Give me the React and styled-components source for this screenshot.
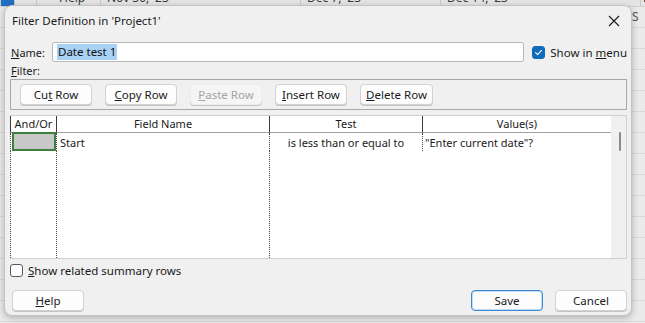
import React from "react";
import styled, { createGlobalStyle } from "styled-components";

const Global = createGlobalStyle`
  html, body { margin: 0; padding: 0; }
  body { width: 645px; height: 323px; overflow: hidden; font-family: "Noto Sans", "Segoe UI", sans-serif; }
`;

const Desktop = styled.div`
  position: relative;
  width: 645px;
  height: 323px;
  background: #eaeaea;
  overflow: hidden;
`;

const GanttHeader = styled.div`
  display: flex;
  height: 6px;
  overflow: hidden;
  align-items: flex-end;
  background: #e4e4e4;
  border-bottom: 1px solid #cfcfcf;
`;

const HeadCell = styled.div`
  width: ${(p) => p.w}px;
  flex: none;
  height: 16px;
  line-height: 16px;
  font-size: 12px;
  color: #3a3a3a;
  white-space: nowrap;
  padding-left: ${(p) => p.pl || 4}px;
  border-left: 1px solid #c8c8c8;
  box-sizing: border-box;
  background: ${(p) => p.bg || "transparent"};
`;

const GridRows = styled.div`
  display: flex;
  flex-direction: column;
`;

const GridRow = styled.div`
  height: 20px;
  border-bottom: 1px solid #d8d8d8;
  display: flex;
  justify-content: flex-end;
  font-size: 12px;
  color: #555;
`;

const SideText = styled.span`
  width: 13px;
  line-height: 20px;
`;

const Dialog = styled.div`
  position: absolute;
  left: 4px;
  top: 5px;
  width: 628px;
  height: 311px;
  box-sizing: border-box;
  background: #f0f0f0;
  border: 1px solid #c4c4c4;
  border-radius: 8px;
  box-shadow: 0 2px 6px rgba(0, 0, 0, 0.25);
  display: flex;
  flex-direction: column;
  font-family: "Noto Sans", "Segoe UI", sans-serif;
  font-size: 11px;
  color: #1a1a1a;
  white-space: nowrap;
`;

const TitleBar = styled.div`
  height: 29px;
  display: flex;
  align-items: center;
  justify-content: space-between;
  padding: 0 6px 0 7px;
`;

const Title = styled.div`
  font-size: 11.5px;
  color: #1a1a1a;
`;

const CloseBtn = styled.div`
  width: 22px;
  height: 22px;
  display: flex;
  align-items: center;
  justify-content: center;
`;

const Body = styled.div`
  display: flex;
  flex-direction: column;
  padding: 0 4px 0 5px;
`;

const NameRow = styled.div`
  display: flex;
  align-items: center;
  height: 22px;
  margin-top: 6px;
`;

const Label = styled.span`
  width: ${(p) => p.w || "auto"};
  flex: none;
  padding-left: 1px;
`;

const U = styled.span`
  text-decoration: underline;
  text-underline-offset: 1px;
`;

const NameInput = styled.div`
  width: 477px;
  height: 20px;
  box-sizing: border-box;
  background: #ffffff;
  border: 1px solid #b8b8b8;
  border-radius: 2px;
  display: flex;
  align-items: center;
  padding-left: 4px;
  margin-left: 3px;
`;

const Selected = styled.span`
  background: #a9d1f4;
  color: #111;
  padding: 1px 1px;
  line-height: 14px;
  font-size: 11.5px;
`;

const CheckLabel = styled.label`
  display: flex;
  align-items: center;
  gap: 5px;
  margin-left: ${(p) => p.ml || 0}px;
  font-size: 11.5px;
`;

const Box = styled.span`
  width: 13px;
  height: 13px;
  box-sizing: border-box;
  border-radius: 3px;
  flex: none;
  display: flex;
  align-items: center;
  justify-content: center;
  background: ${(p) => (p.checked ? "#0f6cbd" : "#ffffff")};
  border: 1px solid ${(p) => (p.checked ? "#0f6cbd" : "#5a5a5a")};
`;

const FilterLabel = styled.div`
  height: 14px;
  line-height: 14px;
  margin-top: 1px;
  padding-left: 1px;
`;

const Toolbar = styled.div`
  margin-top: 1px;
  height: 31px;
  box-sizing: border-box;
  border: 1px solid #a8a8a8;
  display: flex;
  align-items: center;
  gap: 13px;
  padding-left: 9px;
`;

const Button = styled.div`
  width: ${(p) => p.w || 72}px;
  height: 21px;
  box-sizing: border-box;
  border-radius: 4px;
  display: flex;
  align-items: center;
  justify-content: center;
  font-size: 11.5px;
  background: ${(p) => (p.disabled ? "#f5f5f5" : "#fdfdfd")};
  color: ${(p) => (p.disabled ? "#a3a3a3" : "#1a1a1a")};
  border: 1px solid ${(p) => (p.primary ? "#3d89d6" : p.disabled ? "#ececec" : "#d3d3d3")};
  box-shadow: ${(p) => (p.primary ? "inset 0 0 0 1px #c4dcf3" : "0 1px 0 #c4c4c4")};
`;

const Table = styled.div`
  margin-top: 5px;
  height: 144px;
  box-sizing: border-box;
  border: 1px solid #d0d0d0;
  border-left: none;
  display: flex;
  background: #ffffff;
`;

const Grid = styled.div`
  flex: 1;
  display: grid;
  grid-template-columns: 46px 213px 153px 1fr;
  grid-template-rows: 17px 18px 1fr;
`;

const HCell = styled.div`
  border-left: 1px solid #3a3a3a;
  border-bottom: 1px solid #a0a0a0;
  display: flex;
  align-items: center;
  justify-content: center;
  color: #1a1a1a;
  line-height: 16px;
`;

const Cell = styled.div`
  border-left: 1px dotted #4a4a4a;
  display: flex;
  align-items: center;
  justify-content: ${(p) => p.align || "flex-start"};
  padding-left: ${(p) => p.pl || 0}px;
  color: #1a1a1a;
`;

const SelCell = styled.div`
  border-left: 1px dotted #4a4a4a;
  display: flex;
  padding: 0 0 0 1px;
`;

const SelFill = styled.div`
  flex: 1;
  background: #c8c8c8;
  border: 2px solid #3e7f3e;
  margin-top: -1px;
`;

const EmptyCell = styled.div`
  border-left: 1px dotted ${(p) => (p.last ? "transparent" : "#4a4a4a")};
`;

const ScrollTrack = styled.div`
  width: 15px;
  background: #f0f0f0;
  display: flex;
  justify-content: center;
  padding-top: 16px;
  box-sizing: border-box;
`;

const Thumb = styled.div`
  width: 2px;
  height: 19px;
  border-radius: 1px;
  background: #8a8a8a;
  margin-left: 2px;
`;

const SummaryRow = styled.div`
  margin-top: 4px;
  height: 14px;
  display: flex;
  align-items: center;
`;

const Footer = styled.div`
  margin-top: 13px;
  display: flex;
  align-items: center;
  padding-left: 2px;
`;

const Spacer = styled.div`
  flex: 1;
`;

const FooterRight = styled.div`
  display: flex;
  gap: 12px;
`;

function Check() {
  return (
    <svg width="9" height="9" viewBox="0 0 10 10">
      <path d="M1.8 5.2 L4 7.3 L8.3 2.6" fill="none" stroke="#fff" strokeWidth="1.3" strokeLinecap="round" strokeLinejoin="round" />
    </svg>
  );
}

export default function App() {
  const rows = Array.from({ length: 15 });
  return (
    <Desktop>
      <Global />
      <GanttHeader>
        <HeadCell w={14} bg="#1f6fc5" />
        <HeadCell w={22} />
        <HeadCell w={64} pl={22}>Help</HeadCell>
        <HeadCell w={200} pl={6}>Nov 30, '23</HeadCell>
        <HeadCell w={140} pl={6}>Dec 7, '23</HeadCell>
        <HeadCell w={200} pl={6}>Dec 14, '23</HeadCell>
        <HeadCell w={40} pl={2}>De</HeadCell>
      </GanttHeader>
      <GridRows>
        <GridRow><SideText>S</SideText></GridRow>
        {rows.map((_, i) => (
          <GridRow key={i} />
        ))}
      </GridRows>

      <Dialog>
        <TitleBar>
          <Title>Filter Definition in 'Project1'</Title>
          <CloseBtn>
            <svg width="12" height="12" viewBox="0 0 12 12">
              <path d="M1 1 L11 11 M11 1 L1 11" stroke="#1a1a1a" strokeWidth="1.1" />
            </svg>
          </CloseBtn>
        </TitleBar>
        <Body>
          <NameRow>
            <Label w="38px">
              <U>N</U>ame:
            </Label>
            <NameInput>
              <Selected>Date test 1</Selected>
            </NameInput>
            <CheckLabel ml={8}>
              <Box checked>
                <Check />
              </Box>
              <span>
                Show in <U>m</U>enu
              </span>
            </CheckLabel>
          </NameRow>
          <FilterLabel>
            <U>F</U>ilter:
          </FilterLabel>
          <Toolbar>
            <Button>
              Cu<U>t</U>&nbsp;Row
            </Button>
            <Button>
              <U>C</U>opy Row
            </Button>
            <Button disabled>
              <U>P</U>aste Row
            </Button>
            <Button>
              <U>I</U>nsert Row
            </Button>
            <Button w={73}>
              <U>D</U>elete Row
            </Button>
          </Toolbar>
          <Table>
            <Grid>
              <HCell>And/Or</HCell>
              <HCell>Field Name</HCell>
              <HCell>Test</HCell>
              <HCell>Value(s)</HCell>
              <SelCell>
                <SelFill />
              </SelCell>
              <Cell pl={3}>Start</Cell>
              <Cell align="center">is less than or equal to</Cell>
              <Cell pl={2}>"Enter current date"?</Cell>
              <EmptyCell />
              <EmptyCell />
              <EmptyCell />
              <EmptyCell last />
            </Grid>
            <ScrollTrack>
              <Thumb />
            </ScrollTrack>
          </Table>
          <SummaryRow>
            <CheckLabel>
              <Box />
              <span>
                <U>S</U>how related summary rows
              </span>
            </CheckLabel>
          </SummaryRow>
          <Footer>
            <Button>
              <U>H</U>elp
            </Button>
            <Spacer />
            <FooterRight>
              <Button primary>Save</Button>
              <Button>Cancel</Button>
            </FooterRight>
          </Footer>
        </Body>
      </Dialog>
    </Desktop>
  );
}
